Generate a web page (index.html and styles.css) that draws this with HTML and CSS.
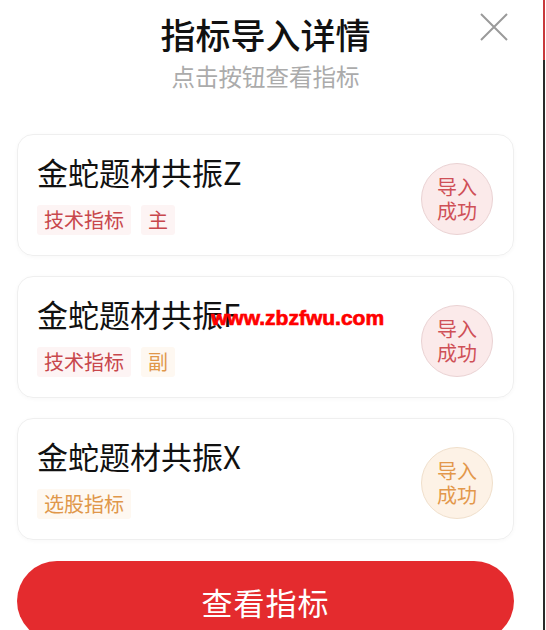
FILE: index.html
```html
<!DOCTYPE html>
<html lang="zh-CN">
<head>
    <meta charset="UTF-8">
    <meta name="viewport" content="width=device-width, initial-scale=1.0">
    <title>指标导入详情</title>
    <link rel="stylesheet" href="styles.css">
</head>
<body>
    <div class="sheet">
        <header class="head">
            <h1 class="title">指标导入详情</h1>
            <p class="subtitle">点击按钮查看指标</p>
            <button class="close" type="button" aria-label="关闭">
                <svg width="28" height="28" viewBox="0 0 28 28">
                    <path d="M1 1 L27 27 M27 1 L1 27" stroke="#9a9a9a" stroke-width="2" fill="none"/>
                </svg>
            </button>
        </header>

        <ul class="list">
            <li class="card">
                <div class="info">
                    <div class="name">金蛇题材共振Z</div>
                    <div class="tags">
                        <span class="tag red">技术指标</span>
                        <span class="tag red">主</span>
                    </div>
                </div>
                <div class="badge red"><span>导入</span><span>成功</span></div>
            </li>
            <li class="card">
                <div class="info">
                    <div class="name">金蛇题材共振F</div>
                    <div class="tags">
                        <span class="tag red">技术指标</span>
                        <span class="tag orange">副</span>
                    </div>
                </div>
                <div class="badge red"><span>导入</span><span>成功</span></div>
            </li>
            <li class="card">
                <div class="info">
                    <div class="name">金蛇题材共振X</div>
                    <div class="tags">
                        <span class="tag orange">选股指标</span>
                    </div>
                </div>
                <div class="badge orange"><span>导入</span><span>成功</span></div>
            </li>
        </ul>

        <button class="primary" type="button">查看指标</button>
    </div>

    <div class="watermark">www.zbzfwu.com</div>
</body>
</html>
```

FILE: styles.css
```css
body {
    margin: 0;
    background: #fff;
    font-family: "Noto Sans CJK SC", "Noto Sans", sans-serif;
    color: #111;
    overflow: hidden;
}

/* dark frame edge on the right of the capture */
body::after {
    content: "";
    position: fixed;
    top: 0;
    bottom: 0;
    right: 1px;
    width: 2px;
    background: linear-gradient(#c9393c 0, #c9393c 60px, #2a2a2a 60px);
}

.sheet {
    padding: 0 32px 0 17px;
}

.head {
    position: relative;
    text-align: center;
    padding-top: 13px;
}

.title {
    margin: 0;
    font-size: 35px;
    line-height: 41px;
    font-weight: 500;
    color: #111;
}

.subtitle {
    margin: 7px 0 0;
    font-size: 23.5px;
    line-height: 30px;
    color: #ababab;
}

.close {
    position: absolute;
    top: 13px;
    right: 6px;
    padding: 0;
    border: none;
    background: none;
    width: 28px;
    height: 28px;
}

.list {
    list-style: none;
    margin: 43px 0 0;
    padding: 0;
    display: flex;
    flex-direction: column;
    gap: 20px;
}

.card {
    display: flex;
    align-items: center;
    justify-content: space-between;
    padding: 18px 20px 20px 19px;
    border: 1px solid #efefef;
    border-radius: 16px;
    box-shadow: 0 1px 4px rgba(0, 0, 0, 0.03);
}

.name {
    font-size: 31px;
    line-height: 38px;
    color: #111;
}

.tags {
    display: flex;
    gap: 10px;
    margin-top: 14px;
}

.tag {
    font-size: 20px;
    line-height: 30px;
    padding: 0 7px;
    border-radius: 3px;
}

.tag.red {
    color: #c8474c;
    background: #fdf4f4;
}

.tag.orange {
    color: #e0974a;
    background: #fef8f1;
}

.badge {
    width: 72px;
    height: 72px;
    box-sizing: border-box;
    border-radius: 50%;
    display: flex;
    flex-direction: column;
    align-items: center;
    justify-content: center;
    font-size: 20px;
    line-height: 24px;
    margin-top: 10px;
}

.badge.red {
    color: #cf5057;
    background: #fbeaea;
    border: 1px solid #ead2d3;
}

.badge.orange {
    color: #e3984b;
    background: #fdf2e6;
    border: 1px solid #f0dfcb;
}

.primary {
    display: block;
    width: 100%;
    height: 80px;
    margin-top: 21px;
    border: none;
    border-radius: 40px;
    background: #e42b2e;
    color: #fff;
    font-family: "Noto Sans CJK SC", "Noto Sans", sans-serif;
    font-size: 31px;
    letter-spacing: 1px;
}

.watermark {
    position: absolute;
    left: 211px;
    top: 307px;
    font-family: "Liberation Sans", Arial, sans-serif;
    font-weight: bold;
    font-size: 21px;
    line-height: 21px;
    color: #ff0000;
    -webkit-text-stroke: 0.7px #ff0000;
}
```
